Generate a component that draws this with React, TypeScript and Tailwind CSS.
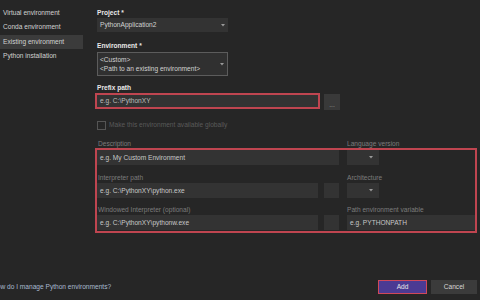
import React from "react";

const navItems = [
  { label: "Virtual environment", active: false },
  { label: "Conda environment", active: false },
  { label: "Existing environment", active: true },
  { label: "Python installation", active: false },
];

function Chevron() {
  return (
    <svg width="4" height="3" viewBox="0 0 4 3" className="shrink-0">
      <path d="M0 0 L4 0 L2 2.5 Z" fill="#9a9a9a" />
    </svg>
  );
}

function Field({ text, className }: { text?: string; className: string }) {
  return (
    <div className={`h-[15px] bg-[#333333] flex items-center pl-[3px] text-[#c8c8c8] ${className}`}>
      {text}
    </div>
  );
}

function Dropdown({ className }: { className: string }) {
  return (
    <div className={`h-[15px] bg-[#333333] flex items-center justify-end pr-[6px] ${className}`}>
      <Chevron />
    </div>
  );
}

export default function App() {
  return (
    <div
      className="w-[480px] h-[300px] bg-[#262626] text-[6.6px] leading-[8px] text-[#d2d2d2] flex flex-col overflow-hidden"
      style={{ fontFamily: '"Liberation Sans", Arial, sans-serif' }}
    >
      <div className="flex flex-1">
        {/* Sidebar */}
        <nav className="w-[83px] pt-[5.5px] flex flex-col">
          {navItems.map(item => (
            <div
              key={item.label}
              className={`h-[14.5px] flex items-center pl-[3px] ${item.active ? "bg-[#3b3b3b]" : ""}`}
            >
              {item.label}
            </div>
          ))}
        </nav>

        {/* Form */}
        <main className="ml-[12px] pt-[9px] flex flex-col">
          <div className="pl-[2px] font-semibold text-[#e8e8e8]">Project *</div>
          <div className="ml-[2px] mt-[1px] w-[131px] h-[14px] bg-[#333333] flex items-center justify-between pl-[3px] pr-[3px]">
            <span>PythonApplication2</span>
            <Chevron />
          </div>

          <div className="pl-[2px] mt-[10px] font-semibold text-[#e8e8e8]">Environment *</div>
          <div className="ml-[2px] mt-[2px] w-[131px] h-[24px] bg-[#303030] border border-[#5c5c5c] flex items-center justify-between pl-[2px] pr-[3px]">
            <div className="flex flex-col leading-[9px]">
              <span>&lt;Custom&gt;</span>
              <span>&lt;Path to an existing environment&gt;</span>
            </div>
            <Chevron />
          </div>

          <div className="pl-[2px] mt-[8px] font-semibold text-[#e8e8e8]">Prefix path</div>
          <div className="mt-[1px] flex items-start gap-[4px]">
            <div className="w-[225px] h-[16px] bg-[#333333] border-2 border-[#bf4550] flex items-center pl-[3px] text-[#bdbdbd]">
              e.g. C:\PythonXY
            </div>
            <div className="mt-[1px] w-[16px] h-[16px] bg-[#393939] flex items-end justify-center pb-[3px] text-[#9a9a9a] leading-[4px]">
              ...
            </div>
          </div>

          <div className="mt-[10px] ml-[2px] h-[10px] flex items-center gap-[3px] text-[#5a5a5a]">
            <div className="w-[9px] h-[9px] border border-[#555555]" />
            <span>Make this environment available globally</span>
          </div>

          <div className="mt-[10px] h-[8px] flex text-[#7c7c7c]">
            <span className="pl-[3px] w-[252px]">Description</span>
            <span>Language version</span>
          </div>

          {/* Highlighted group */}
          <div className="w-[382px] h-[85px] border-2 border-[#bf4550] flex flex-col">
            <div className="flex gap-[8px]">
              <Field text="e.g. My Custom Environment" className="w-[242px]" />
              <Dropdown className="w-[32px]" />
            </div>

            <div className="mt-[9px] h-[8px] flex text-[#7c7c7c]">
              <span className="pl-[1px] w-[250px]">Interpreter path</span>
              <span>Architecture</span>
            </div>
            <div className="mt-[1px] flex">
              <Field text="e.g. C:\PythonXY\python.exe" className="w-[221px]" />
              <div className="ml-[6px] w-[15px] h-[15px] bg-[#333333]" />
              <Dropdown className="ml-[8px] w-[32px]" />
            </div>

            <div className="mt-[8px] h-[8px] flex text-[#7c7c7c]">
              <span className="pl-[1px] w-[250px]">Windowed Interpreter (optional)</span>
              <span>Path environment variable</span>
            </div>
            <div className="mt-[1px] flex">
              <Field text="e.g. C:\PythonXY\pythonw.exe" className="w-[221px]" />
              <div className="ml-[6px] w-[15px] h-[15px] bg-[#333333]" />
              <Field text="e.g. PYTHONPATH" className="ml-[8px] w-[128px]" />
            </div>
          </div>
        </main>
      </div>

      {/* Footer */}
      <div className="h-[14px] mb-[6px] flex items-center justify-between pr-[3px]">
        <span className="ml-[-8px] text-[#a9bad0]">How do I manage Python environments?</span>
        <div className="flex gap-[4px]">
          <button className="w-[49px] h-[14px] bg-[#4b3a93] border-[1.5px] border-[#d0485a] text-[#e6e6e6] text-[6.6px] leading-[8px]">
            Add
          </button>
          <button className="w-[46px] h-[14px] bg-[#3b3b3b] text-[#d6d6d6] text-[6.6px] leading-[8px]">
            Cancel
          </button>
        </div>
      </div>
    </div>
  );
}
